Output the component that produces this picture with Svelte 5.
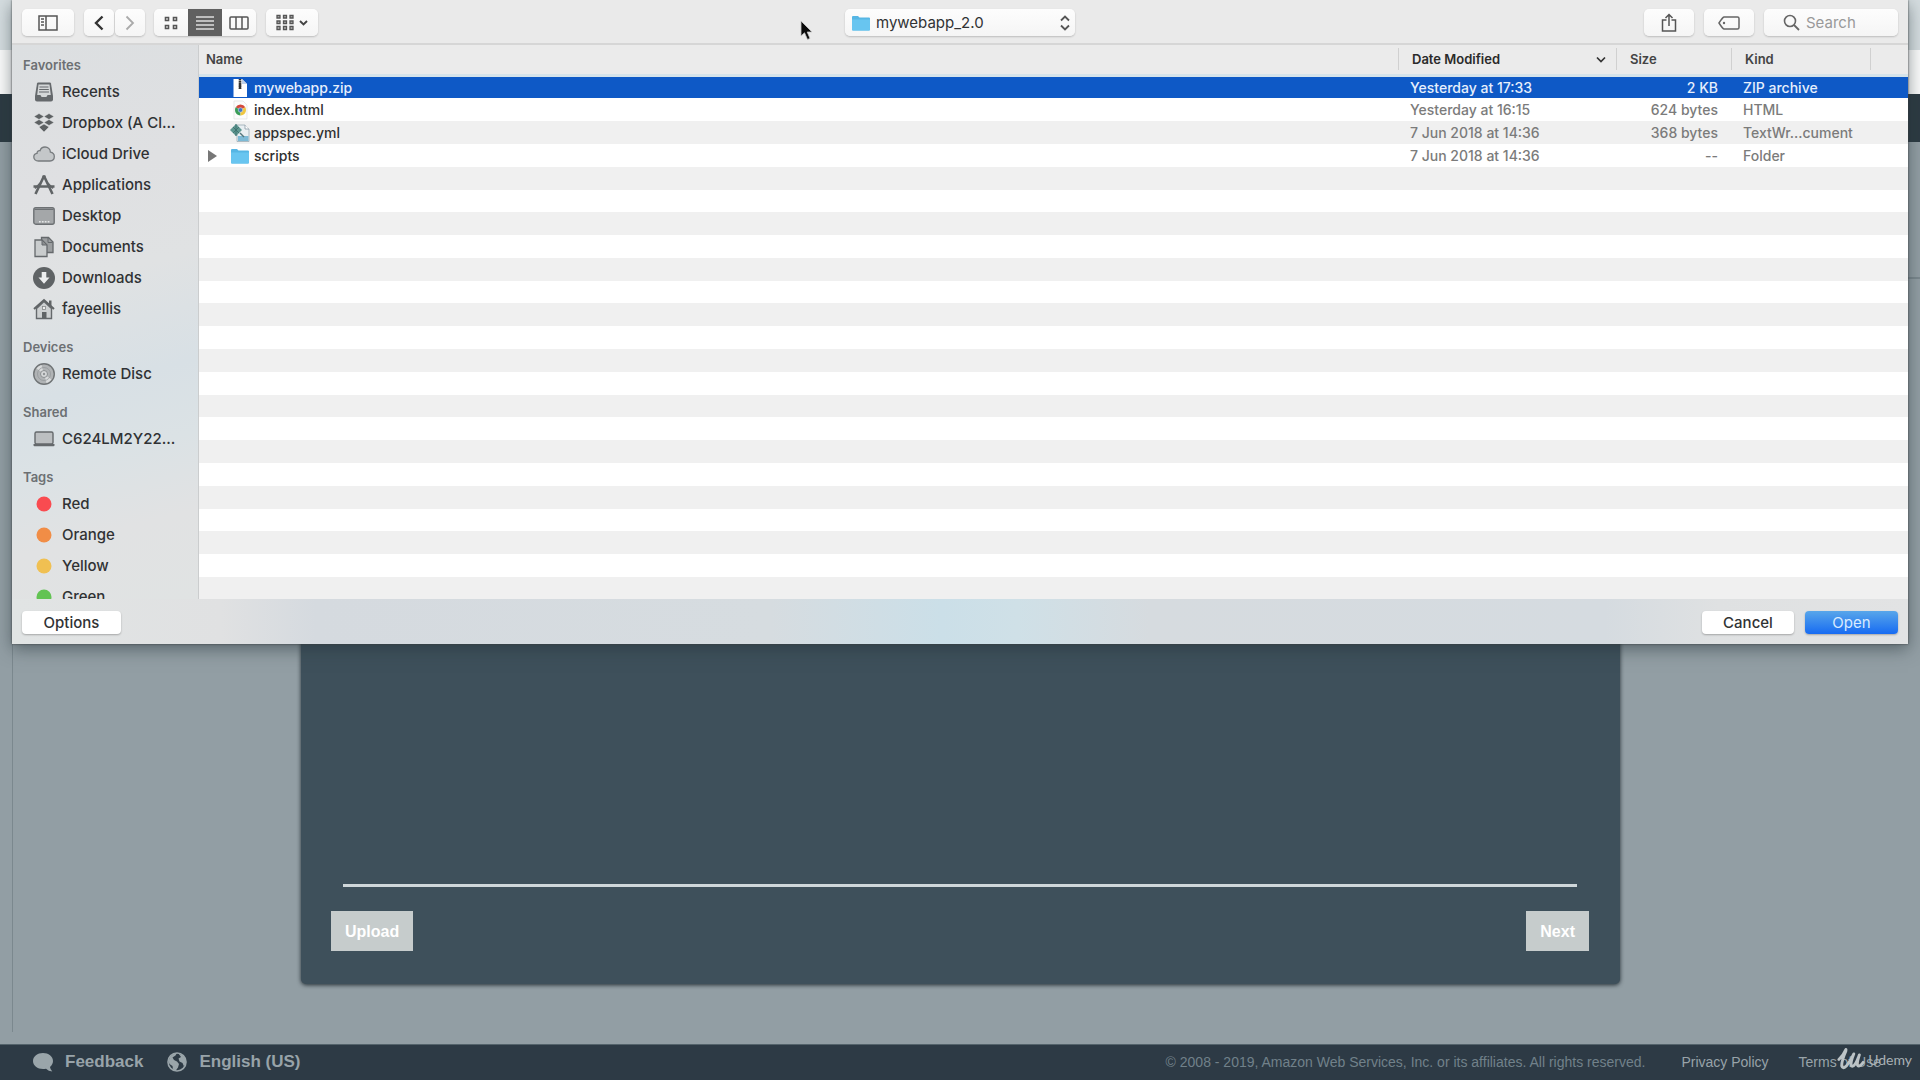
<script>
  const favorites = [
    ['recents', 'Recents'],
    ['dropbox', 'Dropbox (A Cl...'],
    ['cloud', 'iCloud Drive'],
    ['apps', 'Applications'],
    ['desktop', 'Desktop'],
    ['documents', 'Documents'],
    ['downloads', 'Downloads'],
    ['home', 'fayeellis']
  ];
  const sections = [
    { title: 'Favorites', items: favorites },
    { title: 'Devices', items: [['disc', 'Remote Disc']] },
    { title: 'Shared', items: [['laptop', 'C624LM2Y22...']] },
    {
      title: 'Tags',
      items: [
        ['red', 'Red'],
        ['orange', 'Orange'],
        ['yellow', 'Yellow'],
        ['green', 'Green']
      ]
    }
  ];
  const files = [
    { icon: 'zip', name: 'mywebapp.zip', date: 'Yesterday at 17:33', size: '2 KB', kind: 'ZIP archive', selected: true },
    { icon: 'html', name: 'index.html', date: 'Yesterday at 16:15', size: '624 bytes', kind: 'HTML' },
    { icon: 'yml', name: 'appspec.yml', date: '7 Jun 2018 at 14:36', size: '368 bytes', kind: 'TextWr...cument' },
    { icon: 'folder', name: 'scripts', date: '7 Jun 2018 at 14:36', size: '--', kind: 'Folder', folder: true }
  ];
  const emptyRows = Array.from({ length: 19 });
</script>

{#snippet sideIcon(name)}
  <svg class="side-icon" viewBox="0 0 22 22" aria-hidden="true">
    {#if name === 'recents'}
      <path d="M4 2.5Q4.2 1.500 5.200 1.500H16.800Q17.800 1.500 18 2.500L20 15V18.500Q20 20.500 18 20.500H4Q2 20.500 2 18.500V15Z" fill="#65696c" />
      <path d="M5.500 3.500H16.500L17.800 14H14.500Q14 16 13 16H9Q8 16 7.500 14H4.200Z" fill="#d4d7d8" />
      <path d="M6.500 6H15.500M6.200 8.500H15.800M6 11H16" stroke="#65696c" stroke-width="1.200" />
    {:else if name === 'dropbox'}
      <path d="M6 1.500L11 4.500L6 7.500L1 4.500ZM16 1.500L21 4.500L16 7.500L11 4.500ZM6 7.500L11 10.500L6 13.500L1 10.500ZM16 7.500L21 10.500L16 13.500L11 10.500ZM6 15L11 12L16 15L11 20Z" fill="#5d6163" stroke="#dfe1e2" stroke-width=".5" />
    {:else if name === 'cloud'}
      <path d="M5.500 18C2.500 18 .8 16.300 .8 14C.8 12 2.200 10.500 4 10.300C3.900 8.500 5.300 7.300 7 7.700C7.800 5.300 9.700 4 12 4C15 4 17.300 6.200 17.400 9.200C19.800 9.600 21.300 11.300 21.300 13.600C21.300 16.200 19.500 18 17 18Z" fill="#c4c7c9" stroke="#777b7e" stroke-width="1.300" />
    {:else if name === 'apps'}
      <path d="M2.500 20L10.300 3.500M19.500 20L11.700 3.500" stroke="#606466" stroke-width="2.600" />
      <path d="M.5 12.500H21.500" stroke="#606466" stroke-width="2.600" stroke-dasharray="4.500 1 10 1" />
      <circle cx="11" cy="3" r="2" fill="#606466" />
      <path d="M7 9L2 14.500M15 9L20 14.500" stroke="#606466" stroke-width="1.200" />
    {:else if name === 'desktop'}
      <rect x=".8" y="2.800" width="20.400" height="16.400" rx="2" fill="#a4a7a9" stroke="#6d7174" stroke-width="1.400" />
      <path d="M1.500 4.500H20.500" stroke="#6d7174" stroke-width="1" />
      <path d="M6 16.800H16.500" stroke="#e5e7e8" stroke-width="1.500" stroke-dasharray="1.700 1.200" />
    {:else if name === 'documents'}
      <path d="M8.500 1.500H15.500L20 6V16.500H8.500Z" fill="#9b9ea0" stroke="#65696c" stroke-width="1.300" />
      <path d="M2 4H9L14 9V20.500H2Z" fill="#c9cccd" stroke="#65696c" stroke-width="1.300" />
      <path d="M9 4V9H14Z" fill="#8b8e90" stroke="#65696c" stroke-width="1" />
      <path d="M15 2V6.500H19.500" fill="none" stroke="#65696c" stroke-width="1" />
    {:else if name === 'downloads'}
      <circle cx="11" cy="11" r="11" fill="#5f6365" />
      <path d="M8.700 5H13.300V10.500H16.500L11 16.800L5.500 10.500H8.700Z" fill="#eceeef" />
    {:else if name === 'home'}
      <path d="M3.500 10.500L11 3.500L18.500 10.500V20.500H3.500Z" fill="#cdd0d1" stroke="#65696c" stroke-width="1.400" />
      <path d="M16 2.500H18.500V8H16Z" fill="#606466" />
      <path d="M1 11L11 2L21 11" fill="none" stroke="#606466" stroke-width="2" />
      <path d="M9 14H13.500V20.500H9Z" fill="#606466" />
      <rect x="9.500" y="8.500" width="3" height="3" fill="#eee" stroke="#85898b" stroke-width=".8" />
    {:else if name === 'disc'}
      <circle cx="11" cy="11" r="10.300" fill="#b0b3b5" stroke="#707476" stroke-width="1.400" />
      <path d="M11 11L3.500 5.500Q5.500 2.800 8.500 2ZM11 11L18.500 16.500Q16.500 19.200 13.500 20Z" fill="#d9dbdc" />
      <circle cx="11" cy="11" r="6.500" fill="none" stroke="#94989a" stroke-width=".8" />
      <circle cx="11" cy="11" r="3.500" fill="#d6d8d9" stroke="#8b8f91" stroke-width="1" />
      <circle cx="11" cy="11" r="1.200" fill="#909496" />
    {:else if name === 'laptop'}
      <rect x="2" y="4" width="18" height="12" rx="1.500" fill="#bcbfc1" stroke="#65696c" stroke-width="1.400" />
      <path d="M.5 16H21.500V17.200Q21.500 18.200 20.500 18.200H1.500Q.5 18.200 .5 17.200Z" fill="#65696c" />
    {:else}
      <circle class="tag {name}" cx="11" cy="11" r="7.500" />
    {/if}
  </svg>
{/snippet}

{#snippet folderIcon()}
  <svg class="file-icon" viewBox="0 0 20 20" aria-hidden="true">
    <path d="M1 4Q1 3 2 3H7L8.500 4.500H18Q19 4.500 19 5.500V16.500Q19 17.500 18 17.500H2Q1 17.500 1 16.500Z" fill="#56b6e4" />
    <path d="M1 6.500H19V16.500Q19 17.500 18 17.500H2Q1 17.500 1 16.500Z" fill="#68c5f0" />
  </svg>
{/snippet}

{#snippet fileIcon(name)}
  {#if name === 'folder'}
    {@render folderIcon()}
  {:else}
    <svg class="file-icon" viewBox="0 0 20 20" aria-hidden="true">
      {#if name === 'zip'}
        <path d="M3.500 1H12L17 6V19H3.500Z" fill="#fff" />
        <path d="M12 1V6H17Z" fill="#bfd0e8" />
        <path d="M10 1V11" stroke="#333" stroke-width="2.600" stroke-dasharray="1.600 .5" />
        <path d="M10 5V11" stroke="#333" stroke-width="2.200" />
      {:else if name === 'html'}
        <path d="M4 1H13L17 5V19H4Z" fill="#fcfcfc" stroke="#e1e1e1" stroke-width=".7" />
        <path d="M10.500 10L5.700 7.300A5.500 5.500 0 0 1 15.300 7.300Z" fill="#d4493c" />
        <path d="M10.500 10L5.700 7.300A5.500 5.500 0 0 0 10.500 15.500Z" fill="#3a9d58" />
        <path d="M10.500 10L15.300 7.300A5.500 5.500 0 0 1 10.500 15.500Z" fill="#efc640" />
        <circle cx="10.500" cy="10" r="2.300" fill="#4276c4" stroke="#eee" stroke-width=".5" />
      {:else}
        <path d="M7 2H15L19 6V18.500H7Z" fill="#e9eff2" stroke="#9babb4" stroke-width=".8" />
        <path d="M15 2V6H19" fill="#fff" stroke="#8a9ba5" stroke-width=".8" />
        <path d="M8 13H18.500V18H8Z" fill="#7dbad6" />
        <path d="M6 1L12 7L6 13L0 7Z" fill="#5f9791" />
        <path d="M3 4L9 10M6 1L6 13M9 4L3 10" stroke="#3c716d" stroke-width=".9" />
        <path d="M10 10L14 14" stroke="#54777c" stroke-width="1.500" />
      {/if}
    </svg>
  {/if}
{/snippet}

<div class="page">
  <div class="strip pale"></div>
  <div class="strip white"></div>
  <div class="strip navy"></div>
  <main>
    <div class="frame">
      <section class="panel" aria-label="Application upload">
        <hr />
        <div class="panel-actions">
          <button>Upload</button>
          <button>Next</button>
        </div>
      </section>
    </div>
  </main>
  <footer>
    <a href="#feedback" class="strong">
      <svg class="foot-icon" viewBox="0 0 20 20" aria-hidden="true"><path d="M10 1C15.500 1 20 4.300 20 9C20 11.500 18.800 13.500 17 14.900Q17.300 17.500 19.300 19.500Q15.500 19.300 13 16.700Q11.500 17 10 17C4.500 17 0 13.700 0 9S4.500 1 10 1Z" fill="#9aa5aa" /></svg>
      Feedback
    </a>
    <a href="#language" class="strong">
      <svg class="foot-icon" viewBox="0 0 20 20" aria-hidden="true"><circle cx="10" cy="10" r="9" fill="#2d3a45" stroke="#9aa5aa" stroke-width="1.600" /><path d="M1.500 9L3 5L7 1.500L10 1L8.500 3.500L5.500 5.500L7 8L10 9.500L12 12L11 15.500L8.500 19L6 17.500L5.500 14L2.500 12ZM11.500 1.500L15.500 3L18.500 7L19 11L17 14.500L15.500 11L12.500 9.500L11.500 6.500L14 5Z" fill="#9aa5aa" /></svg>
      English (US)
    </a>
    <span class="copyright">© 2008 - 2019, Amazon Web Services, Inc. or its affiliates. All rights reserved.</span>
    <a href="#privacy">Privacy Policy</a>
    <a href="#terms">Terms of Use</a>
  </footer>

  <div class="watermark">
    <svg viewBox="0 0 30 26" aria-hidden="true"><path d="M2 13Q7 8 9 3Q10 1 9.500 4Q5 14 5 20Q6 24 10 20Q15 14 18 7Q14 17 15.500 20Q19 22 24 8Q20 20 23 20Q25 20 28 16" fill="none" stroke="#bcc3c6" stroke-width="3" stroke-linecap="round" stroke-linejoin="round" /></svg>
    <span>Udemy</span>
  </div>

  <div class="dialog" role="dialog" aria-label="Open file">
    <div class="toolbar">
      <div class="left-tools">
        <button class="tool wide" aria-label="Toggle sidebar">
          <svg width="20" height="16" viewBox="0 0 20 16"><path d="M1 1H19V15H1ZM8 1V15" fill="none" stroke="#555" stroke-width="1.500" /><path d="M3 4H6M3 7H6M3 10H6" stroke="#555" stroke-width="1.300" /></svg>
        </button>
        <div class="nav">
          <button class="tool" aria-label="Back"><svg width="12" height="16" viewBox="0 0 12 16"><path d="M9.500 1.500L3 8L9.500 14.500" fill="none" stroke="#333" stroke-width="2.400" /></svg></button>
          <button class="tool" aria-label="Forward"><svg width="12" height="16" viewBox="0 0 12 16"><path d="M2.500 1.500L9 8L2.500 14.500" fill="none" stroke="#aaa" stroke-width="1.800" /></svg></button>
        </div>
        <div class="views">
          <button aria-label="Icon view"><svg width="14" height="14" viewBox="0 0 14 14"><path d="M1.500 1.500H4.500V4.500H1.500ZM9.500 1.500H12.500V4.500H9.500ZM1.500 9.500H4.500V12.500H1.500ZM9.500 9.500H12.500V12.500H9.500Z" fill="none" stroke="#555" stroke-width="1.600" /></svg></button>
          <button class="active" aria-label="List view"><svg width="18" height="14" viewBox="0 0 18 14"><path d="M0 1H18M0 5H18M0 9H18M0 13H18" stroke="#ddd" stroke-width="1.500" /></svg></button>
          <button aria-label="Column view"><svg width="20" height="14" viewBox="0 0 20 14"><rect x="1" y="1" width="18" height="12" rx="1" fill="none" stroke="#555" stroke-width="1.500" /><path d="M7 1V13M13 1V13" stroke="#555" stroke-width="1.500" /></svg></button>
        </div>
        <button class="tool wide arrange" aria-label="Group items">
          <svg width="18" height="17" viewBox="0 0 18 17"><path d="M1 1.500H4V4H1ZM7.500 1.500H10.500V4H7.500ZM14 1.500H17V4H14ZM1 7H4V9.500H1ZM7.500 7H10.500V9.500H7.500ZM14 7H17V9.500H14ZM1 12.500H4V15.500H1ZM7.500 12.500H10.500V15.500H7.500ZM14 12.500H17V15.500H14Z" fill="#bbb" stroke="#555" stroke-width="1.300" /></svg>
          <svg width="9" height="6" viewBox="0 0 9 6"><path d="M1 1L4.500 4.500L8 1" fill="none" stroke="#444" stroke-width="1.900" /></svg>
        </button>
      </div>
      <label class="location">
        {@render folderIcon()}
        <select aria-label="Folder"><option>mywebapp_2.0</option></select>
        <svg width="10" height="16" viewBox="0 0 10 16" aria-hidden="true"><path d="M1 5.500L5 1.500L9 5.500M1 10.500L5 14.500L9 10.500" fill="none" stroke="#555" stroke-width="1.800" /></svg>
      </label>
      <div class="right-tools">
        <button class="tool mid" aria-label="Share"><svg width="16" height="20" viewBox="0 0 16 20"><path d="M5.500 7H1.500V18H14.500V7H10.500M8 13V2M4.500 5L8 1.500L11.500 5" fill="none" stroke="#555" stroke-width="1.500" /></svg></button>
        <button class="tool mid" aria-label="Edit tags"><svg width="22" height="14" viewBox="0 0 22 14"><path d="M6 1H19.500Q21 1 21 2.500V11.500Q21 13 19.500 13H6Q4.500 12.500 1 7Q4.500 1.500 6 1Z" fill="none" stroke="#666" stroke-width="1.500" /><circle cx="6" cy="7" r="1.200" fill="#666" /></svg></button>
        <label class="search">
          <svg width="17" height="17" viewBox="0 0 17 17" aria-hidden="true"><circle cx="7" cy="7" r="5.500" fill="none" stroke="#666" stroke-width="1.600" /><path d="M11 11L16 16" stroke="#666" stroke-width="1.800" /></svg>
          <input type="search" placeholder="Search" aria-label="Search" />
        </label>
      </div>
    </div>

    <div class="browser">
      <nav>
        {#each sections as section}
          <h2>{section.title}</h2>
          <ul>
            {#each section.items as [icon, label]}
              <li><a href="#{icon}">{@render sideIcon(icon)}{label}</a></li>
            {/each}
          </ul>
        {/each}
      </nav>
      <div class="listing">
        <table>
          <colgroup><col /><col class="c-date" /><col class="c-size" /><col class="c-kind" /><col class="c-end" /></colgroup>
          <thead>
            <tr>
              <th><span>Name</span></th>
              <th><span>Date Modified<svg width="10" height="7" viewBox="0 0 10 7" aria-hidden="true"><path d="M1 1.500L5 5.500L9 1.500" fill="none" stroke="#333" stroke-width="1.700" /></svg></span></th>
              <th><span>Size</span></th>
              <th><span>Kind</span></th>
              <th aria-label="More columns"><span></span></th>
            </tr>
          </thead>
          <tbody>
            {#each files as file}
              <tr class:selected={file.selected}>
                <td>
                  <div class="name">
                    <span class="twist">
                      {#if file.folder}<svg width="10" height="12" viewBox="0 0 10 12" aria-hidden="true"><path d="M0 0L9 6L0 12Z" fill="#777" /></svg>{/if}
                    </span>
                    {@render fileIcon(file.icon)}{file.name}
                  </div>
                </td>
                <td>{file.date}</td>
                <td class="size">{file.size}</td>
                <td colspan="2">{file.kind}</td>
              </tr>
            {/each}
            {#each emptyRows as _}
              <tr><td colspan="5"></td></tr>
            {/each}
          </tbody>
        </table>
      </div>
    </div>

    <div class="actions">
      <button class="options">Options</button>
      <button class="cancel">Cancel</button>
      <button class="open">Open</button>
    </div>
  </div>

  <svg class="pointer" viewBox="0 0 14 22" aria-hidden="true"><path d="M1 1V16L4.500 12.800L7.500 19.500L10 18.400L7.200 12H12Z" fill="#0a0a0a" stroke="#c8c8c8" stroke-width=".8" /></svg>
</div>

<style>
  :global(body) { margin: 0; }
  * { box-sizing: border-box; }
  button, input, select { font: inherit; color: inherit; border: 0; margin: 0; padding: 0; }
  svg { display: block; flex: none; }
  .page {
    position: relative;
    display: flex;
    flex-direction: column;
    min-height: 100vh;
    overflow: hidden;
    background: #929ea4;
    font-family: Inter, "Liberation Sans", sans-serif;
  }
  .pale { height: 50px; background: #d5dde0; }
  .white { height: 44px; background: #fbfbfb; }
  .navy { height: 48px; background: #2c3a42; }
  main { flex: 1; display: flex; padding: 135px 0 12px 12px; }
  .frame {
    flex: 1;
    display: flex;
    border-top: 2px solid #7b888e;
    border-left: 1px solid #7b888e;
    padding: 40px 300px 48px 288px;
  }
  .panel {
    flex: 1;
    display: flex;
    flex-direction: column;
    justify-content: flex-end;
    padding: 0 31px 33px 30px;
    border-radius: 5px;
    background: #3e505b;
    box-shadow: 0 1px 4px #222d33;
    font-family: "Liberation Sans", Arial, sans-serif;
  }
  hr { height: 3px; margin: 0 12px 24px; border: 0; background: #cfd7da; }
  .panel-actions { display: flex; justify-content: space-between; }
  .panel-actions button {
    height: 40px;
    padding: 2px 14px 0;
    background: #c6cccc;
    color: #fff;
    font-size: 16px;
    font-weight: 700;
  }
  footer {
    display: flex;
    align-items: center;
    height: 36px;
    padding: 0 39px 1px 33px;
    border-top: 1px solid #54636b;
    background: #2d3a45;
    font-family: "Liberation Sans", Arial, sans-serif;
    font-size: 14px;
    color: #71818a;
    white-space: nowrap;
  }
  footer a { color: #98a3a9; text-decoration: none; margin-left: 30px; }
  footer .strong { display: flex; align-items: center; gap: 12px; margin: 0 24px 0 0; font-size: 17px; font-weight: 700; }
  .foot-icon { width: 20px; height: 20px; }
  .copyright { margin: 0 6px 0 auto; }
  .watermark {
    position: absolute;
    right: 8px;
    bottom: 8px;
    display: flex;
    align-items: center;
    gap: 3px;
    color: #a9b1b5;
    font: 14px Lato, sans-serif;
  }
  .watermark svg { width: 28px; height: 25px; }

  .dialog {
    position: absolute;
    top: 0;
    left: 12px;
    right: 12px;
    background: linear-gradient(90deg, #e1e4e4, #e0e1e2 11%, #d5dadf 16%, #d6dce0 40%, #cbdfe8 49%, #cfe0e7 53%, #d6dbdf 60%, #d5dbe0 84%, #dfe1e2 90%, #e2e3e4);
    box-shadow: 0 5px 16px #26323988, 0 0 2px #444;
    font-size: 15px;
    color: #303234;
  }
  .toolbar {
    display: grid;
    grid-template-columns: 1fr 230px 1fr;
    align-items: center;
    height: 45px;
    padding: 2px 10px 0;
    border-bottom: 2px solid #d6d6d6;
    background: #eaeaea;
  }
  .left-tools { display: flex; }
  .tool, .views, .location, .search {
    display: flex;
    align-items: center;
    justify-content: center;
    height: 27px;
    border-radius: 5px;
    background: linear-gradient(#fdfdfd, #f5f5f5);
    box-shadow: 0 1px 2px #0003;
  }
  .tool { width: 30px; }
  .wide { width: 52px; }
  .mid { width: 50px; }
  .nav { display: flex; gap: 1px; margin: 0 9px 0 10px; }
  .arrange { gap: 5px; margin-left: 10px; }
  .views button {
    display: flex;
    align-items: center;
    justify-content: center;
    width: 34px;
    height: 27px;
    background: none;
  }
  .views .active { background: #606060; }
  .location { padding: 0 5px 0 6px; }
  .location select { flex: 1; margin-left: 5px; appearance: none; background: none; }
  .right-tools { display: flex; justify-content: flex-end; gap: 10px; }
  .search { width: 134px; gap: 6px; padding-left: 19px; }
  .search input { flex: 1; min-width: 0; background: none; appearance: none; }
  .search input::placeholder { color: #999; opacity: 1; }

  .browser { display: grid; grid-template-columns: 187px 1fr; height: 554px; }
  nav {
    overflow: hidden;
    padding: 9px 0 0 11px;
    border-right: 1px solid #cbcdce;
    background: linear-gradient(165deg, #dcdfe1, #dfe0e2 25%, #e0e2e3 42%, #d8e0e5 60%, #dbe2e5 72%, #e1e2e3 85%, #e0e3e3);
  }
  h2 { margin: 0; font-size: 13px; line-height: 22px; font-weight: 600; color: #6c7073; }
  ul { margin: 0 0 12px; padding: 0; list-style: none; }
  li a { display: flex; align-items: center; gap: 7px; height: 31px; padding-left: 10px; color: inherit; text-decoration: none; font-weight: 500; white-space: nowrap; }
  .side-icon { width: 22px; height: 22px; }
  .red { fill: #f94b50; }
  .orange { fill: #f18d46; }
  .yellow { fill: #f0c052; }
  .green { fill: #62c353; }

  .listing { overflow: hidden; background: #fff; }
  table { width: 100%; height: 555px; border-collapse: collapse; table-layout: fixed; }
  .c-date { width: 218px; }
  .c-size { width: 115px; }
  .c-kind { width: 139px; }
  .c-end { width: 38px; }
  th, td { padding: 0; text-align: left; white-space: nowrap; font-size: 14px; line-height: 20px; }
  thead tr { height: 30px; background: #ebebeb; }
  thead { border-bottom: 3px solid #d5e3ea; }
  th { font-size: 13px; font-weight: 600; color: #444; }
  th:nth-child(2) { color: #2a2a2a; }
  th span { display: flex; align-items: center; justify-content: space-between; height: 22px; padding: 0 10px 0 13px; border-left: 1px solid #d0d0d0; }
  th:first-child span { border: 0; padding-left: 7px; }
  tbody tr:nth-child(even) { background: #fff; }
  tbody tr:nth-child(odd) { background: #f0f0f0; }
  td { height: 22px; color: #7b7b7b; padding: 1px 0 0 12px; font-weight: 500; }
  td:first-child { padding-left: 9px; color: #303030; }
  td.size { padding: 1px 13px 0 0; text-align: right; }
  tbody tr.selected { background: #0e59c6; }
  .selected td, .selected td:first-child { color: #e6effc; }
  .name { display: flex; align-items: center; height: 20px; }
  .twist { width: 22px; }
  .file-icon { width: 20px; height: 20px; }
  .name .file-icon { margin-right: 4px; }

  .actions { display: flex; align-items: center; gap: 11px; height: 45px; padding: 1px 10px 0; }
  .actions button { height: 23px; border-radius: 4px; background: #fff; box-shadow: 0 1px 2px #0004; font-weight: 500; }
  .actions .options { width: 99px; margin-right: auto; }
  .actions .cancel { width: 92px; }
  .actions .open { width: 93px; background: linear-gradient(#58a6ea, #176bf2); color: #d9ebff; font-weight: 400; }
  .pointer { position: absolute; left: 800px; top: 20px; width: 14px; height: 22px; }
</style>
